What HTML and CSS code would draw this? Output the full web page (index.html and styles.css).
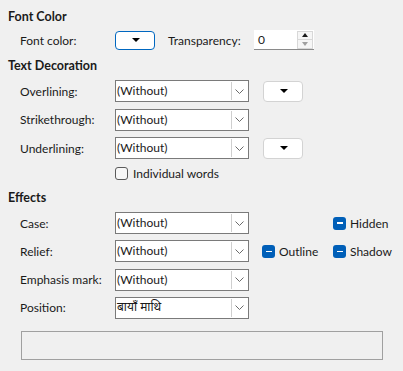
FILE: index.html
```html
<!DOCTYPE html>
<html lang="en">
<head>
<meta charset="utf-8">
<title>Font Effects</title>
<link rel="stylesheet" href="styles.css">
</head>
<body>
<div class="page">
  <div class="heading first">Font Color</div>
  <div class="row row-color">
    <span class="label">Font color:</span>
    <button class="colorbtn focused"><span class="tri"></span></button>
    <span class="trans-label">Transparency:</span>
    <div class="spin">
      <span class="spin-value">0</span>
      <div class="spin-btns">
        <span class="spin-up"><span class="up-tri"></span></span>
        <span class="spin-down"><span class="down-tri"></span></span>
      </div>
    </div>
  </div>

  <div class="heading">Text Decoration</div>
  <div class="row deco-first">
    <span class="label">Overlining:</span>
    <div class="combo"><span class="combo-text">(Without)</span><span class="combo-btn"><svg width="9" height="5" viewBox="0 0 9 5"><path d="M0.5 0.5 L4.5 4.5 L8.5 0.5" fill="none" stroke="#6b6b6b" stroke-width="1"/></svg></span></div>
    <button class="colorbtn gap"><span class="tri"></span></button>
  </div>
  <div class="row deco">
    <span class="label">Strikethrough:</span>
    <div class="combo"><span class="combo-text">(Without)</span><span class="combo-btn"><svg width="9" height="5" viewBox="0 0 9 5"><path d="M0.5 0.5 L4.5 4.5 L8.5 0.5" fill="none" stroke="#6b6b6b" stroke-width="1"/></svg></span></div>
  </div>
  <div class="row deco">
    <span class="label">Underlining:</span>
    <div class="combo"><span class="combo-text">(Without)</span><span class="combo-btn"><svg width="9" height="5" viewBox="0 0 9 5"><path d="M0.5 0.5 L4.5 4.5 L8.5 0.5" fill="none" stroke="#6b6b6b" stroke-width="1"/></svg></span></div>
    <button class="colorbtn gap"><span class="tri"></span></button>
  </div>
  <div class="row checkrow">
    <span class="label"></span>
    <span class="checkbox"></span>
    <span class="check-text">Individual words</span>
  </div>

  <div class="heading effects">Effects</div>
  <div class="row eff-first">
    <span class="label">Case:</span>
    <div class="combo"><span class="combo-text">(Without)</span><span class="combo-btn"><svg width="9" height="5" viewBox="0 0 9 5"><path d="M0.5 0.5 L4.5 4.5 L8.5 0.5" fill="none" stroke="#6b6b6b" stroke-width="1"/></svg></span></div>
    <span class="slot"></span>
    <span class="tri-check"><span class="minus"></span></span><span class="tri-text">Hidden</span>
  </div>
  <div class="row eff">
    <span class="label">Relief:</span>
    <div class="combo"><span class="combo-text">(Without)</span><span class="combo-btn"><svg width="9" height="5" viewBox="0 0 9 5"><path d="M0.5 0.5 L4.5 4.5 L8.5 0.5" fill="none" stroke="#6b6b6b" stroke-width="1"/></svg></span></div>
    <span class="slot outline-slot"><span class="tri-check"><span class="minus"></span></span><span class="tri-text">Outline</span></span>
    <span class="tri-check"><span class="minus"></span></span><span class="tri-text">Shadow</span>
  </div>
  <div class="row eff">
    <span class="label">Emphasis mark:</span>
    <div class="combo"><span class="combo-text">(Without)</span><span class="combo-btn"><svg width="9" height="5" viewBox="0 0 9 5"><path d="M0.5 0.5 L4.5 4.5 L8.5 0.5" fill="none" stroke="#6b6b6b" stroke-width="1"/></svg></span></div>
  </div>
  <div class="row eff">
    <span class="label">Position:</span>
    <div class="combo"><span class="combo-text deva">बायाँ माथि</span><span class="combo-btn"><svg width="9" height="5" viewBox="0 0 9 5"><path d="M0.5 0.5 L4.5 4.5 L8.5 0.5" fill="none" stroke="#6b6b6b" stroke-width="1"/></svg></span></div>
  </div>

  <div class="preview"></div>
</div>
</body>
</html>
```

FILE: styles.css
```css
html, body {
  margin: 0;
  padding: 0;
  background: #f0f0f0;
}
body {
  font-family: "Lato", "Noto Sans", "DejaVu Sans", sans-serif;
  font-size: 12px;
  color: #1a1a1a;
}
.page {
  width: 403px;
  height: 371px;
  padding-top: 9px;
  box-sizing: border-box;
  overflow: hidden;
}
.heading {
  font-weight: bold;
  font-size: 12.5px;
  height: 16px;
  line-height: 16px;
  padding-left: 8px;
  margin-top: 8px;
}
.heading.first { margin-top: 0; }
.heading.effects { margin-top: 9px; }
.row {
  display: flex;
  align-items: center;
  height: 22px;
  padding-left: 20px;
}
.row-color { margin-top: 5px; height: 20px; }
.deco-first { margin-top: 6px; }
.deco { margin-top: 6.5px; }
.checkrow { margin-top: 6px; height: 16px; }
.eff-first { margin-top: 6px; }
.eff { margin-top: 6.3px; }
.label {
  width: 95px;
  flex: none;
  white-space: nowrap;
}
.colorbtn {
  width: 40px;
  height: 19px;
  box-sizing: border-box;
  border: 1px solid #d3d3d3;
  border-radius: 4px;
  background: #ffffff;
  padding: 0;
  margin: 0;
  display: flex;
  align-items: center;
  justify-content: flex-end;
  padding-right: 14px;
  flex: none;
}
.colorbtn.focused {
  border-color: #0067c0;
}
.colorbtn.gap {
  margin-left: 14px;
  height: 21px;
}
.tri {
  width: 0;
  height: 0;
  border-left: 4px solid transparent;
  border-right: 4px solid transparent;
  border-top: 4px solid #000;
}
.trans-label {
  margin-left: 13px;
  width: 86px;
  flex: none;
}
.spin {
  width: 60px;
  height: 20px;
  box-sizing: border-box;
  background: #ffffff;
  border-bottom: 1px solid #8a8a8a;
  display: flex;
  align-items: center;
  flex: none;
}
.spin-value {
  flex: 1;
  padding-left: 4px;
}
.spin-btns {
  width: 16px;
  height: 18px;
  margin-right: 1px;
  display: flex;
  flex-direction: column;
  border: 1px solid #d8d8d8;
  box-sizing: border-box;
  background: #f6f6f6;
}
.spin-up, .spin-down {
  flex: 1;
  display: flex;
  align-items: center;
  justify-content: center;
}
.spin-up { border-bottom: 1px solid #d8d8d8; }
.up-tri {
  width: 0; height: 0;
  border-left: 3px solid transparent;
  border-right: 3px solid transparent;
  border-bottom: 4px solid #1a1a1a;
}
.down-tri {
  width: 0; height: 0;
  border-left: 3px solid transparent;
  border-right: 3px solid transparent;
  border-top: 4px solid #a0a0a0;
}
.combo {
  width: 134px;
  height: 22px;
  box-sizing: border-box;
  border: 1px solid #7a7a7a;
  background: #ffffff;
  display: flex;
  align-items: stretch;
  flex: none;
}
.combo-text {
  flex: 1;
  padding-left: 1px;
  line-height: 20px;
  white-space: nowrap;
  overflow: hidden;
}
.combo-text.deva {
  font-family: "Noto Sans", "Noto Sans Devanagari", "Lohit Devanagari", "FreeSans", sans-serif;
  font-size: 12px;
  line-height: 18px;
}
.combo-btn {
  width: 15px;
  border-left: 1px solid #cfcfcf;
  display: flex;
  align-items: center;
  justify-content: center;
  background: #ffffff;
  margin: 1px 1px 1px 0;
}
.checkbox {
  width: 13px;
  height: 13px;
  box-sizing: border-box;
  border: 1px solid #5a5a5a;
  border-radius: 3px;
  background: #f7f7f7;
  flex: none;
}
.check-text {
  margin-left: 5px;
}
.slot {
  width: 84px;
  flex: none;
}
.outline-slot {
  display: flex;
  align-items: center;
  padding-left: 13px;
  width: 71px;
}
.tri-check {
  width: 13px;
  height: 13px;
  border-radius: 3px;
  background: #005fb8;
  display: flex;
  align-items: center;
  justify-content: center;
  flex: none;
}
.minus {
  width: 6px;
  height: 1.5px;
  background: #ffffff;
}
.tri-text {
  margin-left: 4px;
  white-space: nowrap;
}
.preview {
  margin: 12px 0 0 21px;
  width: 362px;
  height: 29px;
  box-sizing: border-box;
  border: 1px solid #a0a0a0;
  background: #f0f0f0;
}
```
